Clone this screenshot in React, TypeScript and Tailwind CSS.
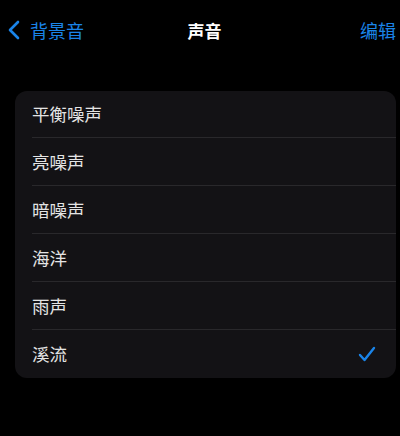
import React from 'react';

const SOUNDS = ['平衡噪声', '亮噪声', '暗噪声', '海洋', '雨声', '溪流'];

export default function App() {
  const selected = '溪流';

  return (
    <div
      className="w-[400px] h-[436px] bg-black overflow-hidden"
      style={{ fontFamily: '"Noto Sans CJK SC", "Noto Sans", sans-serif' }}
    >
      {/* Nav bar */}
      <div className="h-[62px] flex items-center justify-between pl-[7px] pr-[4px] pb-[2px]">
        <div className="flex items-center gap-[9px] w-[120px]">
          <svg width="14" height="20" viewBox="0 0 14 20" fill="none">
            <path d="M11 2 L3 10 L11 18" stroke="#1a84e8" strokeWidth="2.6" strokeLinecap="round" strokeLinejoin="round" />
          </svg>
          <span className="text-[18px] text-[#1a84e8] leading-none">背景音</span>
        </div>
        <span className="text-[17px] font-bold text-white leading-none ml-[6px]">声音</span>
        <div className="w-[120px] flex justify-end">
          <span className="text-[18px] text-[#1a84e8] leading-none">编辑</span>
        </div>
      </div>

      {/* List */}
      <div className="mt-[29px] ml-[15px] mr-[4px] rounded-[12px] bg-[#131215] overflow-hidden">
        {SOUNDS.map((s, i) => (
          <div key={s} className="pl-[17px]">
            <div
              className={
                'flex items-center justify-between pr-[20px] ' +
                (i === 0 ? 'h-[47px] ' : 'h-[48px] ') +
                (i < SOUNDS.length - 1 ? 'border-b border-[#29282b]' : '')
              }
            >
              <span className="text-[17.5px] text-[#e4e4e4] leading-none">{s}</span>
              {s === selected && (
                <svg width="18" height="16" viewBox="0 0 18 16" fill="none">
                  <path d="M2 9 L6.5 14 L16 2" stroke="#1a84e8" strokeWidth="2.4" strokeLinecap="round" strokeLinejoin="round" />
                </svg>
              )}
            </div>
          </div>
        ))}
      </div>
    </div>
  );
}
